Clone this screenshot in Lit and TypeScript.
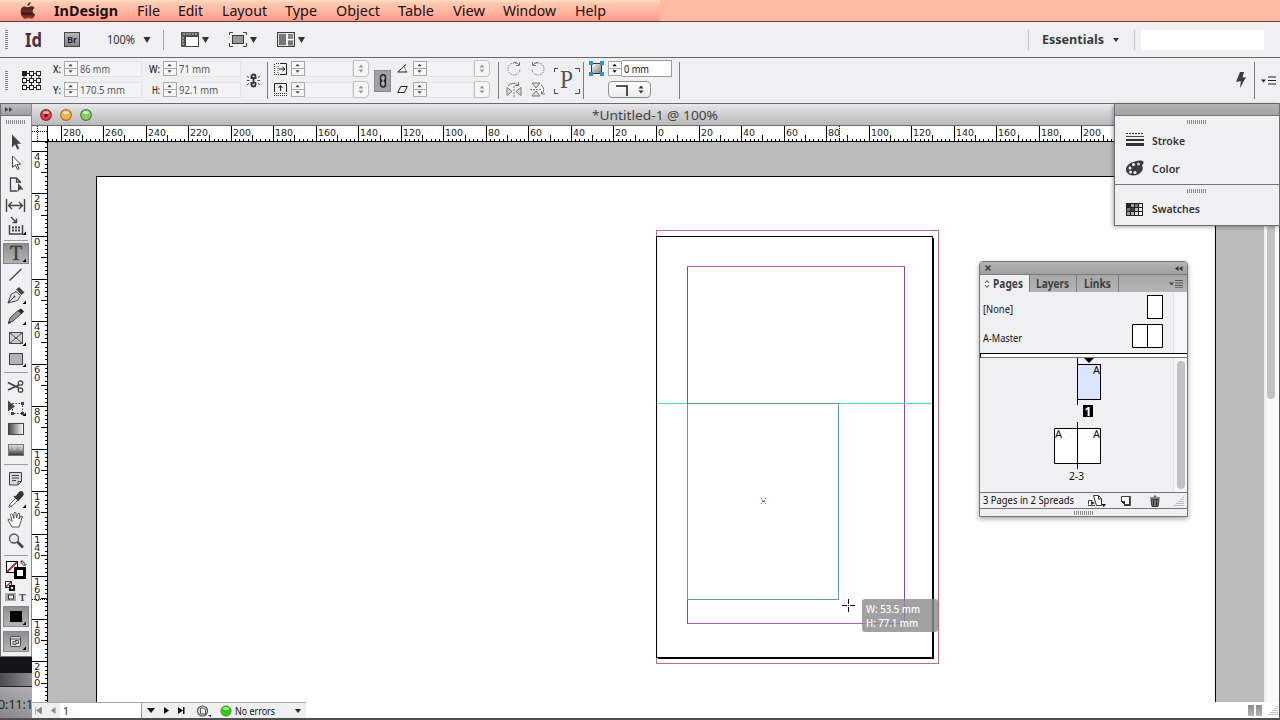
import { LitElement, html, svg, css, nothing } from 'lit';
import { customElement, property } from 'lit/decorators.js';

const MM = 2.1265; // px per millimetre at 100%

// text squeezed to a known advance, so labels keep the same rhythm on any font
const fit = (text: string, width: number, cls = '', height = 16, base = 12) => html`
  <svg class="fit ${cls}" width=${width} height=${height}>
    <text x="0" y=${base} textLength=${width} lengthAdjust="spacingAndGlyphs">${text}</text>
  </svg>`;

const icon = (w: number, h: number, body: unknown, cls = '') =>
  html`<svg class="icon ${cls}" width=${w} height=${h} viewBox="0 0 ${w} ${h}">${body}</svg>`;

const shared = css`
  :host {
    box-sizing: border-box;
    font-family: 'Noto Sans', 'Open Sans', sans-serif;
    font-size: 10.4px;
    color: #222;
  }
  * { box-sizing: border-box; }
  svg { display: block; flex: none; }
  .fit { overflow: visible; fill: currentColor; }
  .grip-h {
    width: 20px;
    height: 4px;
    background: repeating-linear-gradient(90deg, #8b8b8e 0 1px, transparent 1px 2px);
  }
  .grip-v {
    width: 3px;
    height: 20px;
    background: repeating-linear-gradient(#858588 0 1px, transparent 1px 2px);
  }
`;

/* ───────────── menu bar ───────────── */

@customElement('menu-bar')
class MenuBar extends LitElement {
  static styles = [shared, css`
    :host {
      display: flex;
      height: 22px;
      padding-left: 20px;
      border-bottom: 1px solid #6b3a31;
      background:
        linear-gradient(90deg, transparent 660px, #ffbaa4 660px),
        linear-gradient(#fbe3c4 0, #ffc9b0 3px, #ffb7a2 11px, #fd9d8c 20px, #f39482 21px);
      font-size: 14px;
      color: #21100c;
    }
    .apple { margin: 2px 18px 0 0; }
    .item { margin-right: 18.5px; }
    .app { font-weight: 700; }
  `];

  items: [string, number][] = [
    ['InDesign', 64], ['File', 23], ['Edit', 25], ['Layout', 45], ['Type', 32],
    ['Object', 44], ['Table', 36], ['View', 32], ['Window', 53], ['Help', 31],
  ];

  render() {
    return html`
      ${icon(16, 18, svg`
        <path d="M10.6 0c.2 2-1.4 3.9-3.2 3.9C7.2 2.1 8.9.3 10.6 0z" fill="#5a2b22"/>
        <path d="M7.9 5.2c.8 0 1.9-1 3.5-1 1.3 0 2.5.7 3.200 1.700-2.700 1.600-2.300 5.400.6 6.500-.7 2-2.200 4.600-3.700 4.600-1.100 0-1.600-.7-3-.7s-1.900.7-3 .7C3.200 17 .6 12.900.6 9.400c0-3.200 2-5 4-5 1.400 0 2.500.8 3.300.8z" fill="url(#a)"/>
        <defs><linearGradient id="a" x2="0" y2="1"><stop stop-color="#49201c"/><stop offset=".45" stop-color="#6a3028"/><stop offset=".55" stop-color="#3d1512"/><stop offset="1" stop-color="#a3503d"/></linearGradient></defs>
      `, 'apple')}
      ${this.items.map(([t, w], i) => html`<div class="item">${fit(t, w, i ? '' : 'app', 20, 16)}</div>`)}
    `;
  }
}

/* ───────────── application bar ───────────── */

@customElement('application-bar')
class ApplicationBar extends LitElement {
  static styles = [shared, css`
    :host {
      display: flex;
      align-items: center;
      height: 36px;
      padding: 0 16px 0 5px;
      background: #f0eff2;
      border-bottom: 1px solid #6a6a6c;
    }
    .id {
      margin-left: 17px;
      font-size: 20px;
      font-weight: 700;
      color: #4e3041;
    }
    .br {
      margin-left: 22px;
      width: 16px;
      height: 15px;
      border: 1px solid #444;
      background: linear-gradient(#b5b5b5, #858585);
      font-size: 9.5px;
      font-weight: 600;
      padding-left: 2px;
    }
    .zoom { margin: 1px 8px 0 27px; font-size: 12px; color: #333; }
    .rule { width: 1px; height: 20px; background: #a9a9ab; margin: 0 17px 0 12px; }
    .tool { margin-right: 20px; display: flex; align-items: center; gap: 3px; }
    .space { flex: 1; }
    .thin { width: 1px; height: 20px; background: #c4c4c6; }
    .workspace { margin: 0 9px 0 13px; font-size: 12.6px; font-weight: 700; color: #3b3b3d; }
    .small { margin-right: 15px; }
    .search { width: 123px; height: 20px; margin-left: 6px; background: #fff; }
  `];

  render() {
    const down = icon(7, 6, svg`<path d="M0 0h7L3.5 6z" fill="#303030"/>`);
    return html`
      <div class="grip-v"></div>
      ${fit('Id', 17, 'id', 22, 18)}
      <div class="br">${fit('Br', 10, '', 13, 10)}</div>
      ${fit('100%', 28, 'zoom', 16, 12)}
      ${icon(8, 6, svg`<path d="M.5 0h7L4 6z" fill="#303030"/>`)}
      <div class="rule"></div>
      <div class="tool">
        ${icon(18, 15, svg`
          <path d="M0 0h18v4H4v11H0z" fill="#555"/>
          <rect x="4.5" y="4.5" width="13" height="10" fill="#fff" stroke="#444"/>
          <path d="M3 1v2M6 1v2M9 1v2M12 1v2M15 1v2M1 6h2M1 9h2M1 12h2" stroke="#ccc"/>
        `)}${down}
      </div>
      <div class="tool">
        ${icon(18, 15, svg`
          <path d="M.5 3V.5H4M14 .5h3.5V3M17.5 11v3.5H14M4 14.5H.5V11" fill="none" stroke="#444"/>
          <rect x="3.5" y="3.5" width="11" height="8" fill="#999" stroke="#3c3c3c"/>
        `)}${down}
      </div>
      <div class="tool">
        ${icon(18, 15, svg`
          <rect x=".5" y=".5" width="17" height="14" fill="#ddd" stroke="#3c3c3c"/>
          <rect x="2" y="2" width="7" height="11" fill="#777"/>
          <rect x="11" y="2" width="5" height="5" fill="#888"/><rect x="11" y="8.5" width="5" height="5" fill="#777"/>
          <path d="M10 1v13M10 7.5h7" stroke="#fff"/>
        `)}${down}
      </div>
      <div class="space"></div>
      <div class="thin"></div>
      ${fit('Essentials', 62, 'workspace', 16, 12)}
      ${icon(6, 4, svg`<path d="M0 0h6L3 4z" fill="#303030"/>`, 'small')}
      <div class="thin"></div>
      <div class="search"></div>
    `;
  }
}

/* ───────────── numeric field with stepper ───────────── */

@customElement('stepper-field')
class StepperField extends LitElement {
  @property() value = '';
  @property({ type: Number }) textWidth = 0;
  @property({ type: Number }) width = 78;
  @property({ type: Boolean }) combo = false;
  @property({ type: Boolean }) bright = false;

  static styles = [shared, css`
    :host { display: flex; align-items: center; height: 17px; color: #555; }
    .step { border: 1px solid #a9a9ab; background: #f8f8f8; }
    .field {
      display: flex;
      align-items: center;
      height: 16px;
      padding-left: 2px;
      background: #f4f4f6;
      border: 1px solid #e4e4e6;
      border-left: 0;
    }
    .bright { background: #fff; color: #111; border-color: #999; height: 17px; }
    .pop {
      width: 16px;
      height: 17px;
      border: 1px solid #c1c1c3;
      border-radius: 0 4px 4px 0;
      background: #f6f6f7;
      padding: 3px 0 0 4px;
    }
  `];

  render() {
    const dim = this.combo ? 16 : 0;
    const fieldWidth = `width:${this.width - 14 - dim}px`;
    return html`
      ${icon(14, 15, svg`
        <path d="M0 7.5h14" stroke="#999"/>
        <path d="M4 5h5L6.5 2zM4 9.5h5L6.5 12.5z" fill=${this.bright ? '#000' : '#4a4a4a'}/>
      `, 'step')}
      <div class="field ${this.bright ? 'bright' : ''}" style=${fieldWidth}>
        ${this.value ? fit(this.value, this.textWidth, '', 14, 11) : nothing}
      </div>
      ${this.combo ? html`<div class="pop">${icon(6, 9, svg`<path d="M.5 3.5h5L3 .5zM.5 5.5h5L3 8.5z" fill="#999"/>`)}</div>` : nothing}
    `;
  }
}

/* ───────────── control panel strip ───────────── */

@customElement('control-strip')
class ControlStrip extends LitElement {
  static styles = [shared, css`
    :host {
      display: flex;
      align-items: center;
      height: 46px;
      padding: 0 4px 0 5px;
      background: #f0eff2;
      border-bottom: 1px solid #6a6a6c;
    }
    .col { display: flex; flex: none; flex-direction: column; gap: 4px; height: 38px; margin-bottom: 3px; }
    .line { display: flex; align-items: center; height: 17px; }
    .axis { justify-content: flex-end; gap: 3px; }
    .name { color: #222; font-weight: 500; }
    .pos { margin-left: 12px; }
    .size { margin-left: 7px; }
    .ref { margin-left: 14px; }
    .chain { margin-left: 6px; }
    .rule { width: 1px; height: 37px; background: #7d7d80; }
    .r1 { margin: 0 6px 0 7px; }
    .scale { gap: 4px; }
    .link {
      display: flex;
      align-items: center;
      justify-content: center;
      width: 17px;
      height: 22px;
      margin: 0 6px 0 5px;
      background: #a2a2a4;
      border: 1px solid #8b8b8d;
    }
    .ang { margin-right: 5px; }
    .r2 { margin: 0 7px 0 8px; }
    .turn { display: flex; gap: 8px; height: 17px; align-items: center; }
    .turn + .turn { margin-top: 1px; }
    .p { margin: 2px 3px 0 8px; }
    .p text { font-family: 'Liberation Serif', serif; font-size: 26px; fill: #555; }
    .wrap { margin: 1px 4px auto 5px; padding-top: 2px; }
    .corner {
      display: flex;
      align-items: center;
      justify-content: space-between;
      width: 43px;
      height: 17px;
      padding: 0 6px 0 6px;
      border: 1px solid #8f8f91;
      border-radius: 4px;
      background: linear-gradient(#fff, #ececee);
    }
    .r3 { margin-left: 7px; }
    .space { flex: 1; }
    .menu { margin-left: 6px; }
    .r4 { margin-left: 7px; }
  `];

  render() {
    const dots = [0, 1, 2].flatMap(r => [0, 1, 2].map(c => svg`
      <rect x=${.5 + c * 7} y=${.5 + r * 7} width="4" height="4" fill=${r + c ? '#f5f5f5' : '#222'} stroke="#222"/>`));
    return html`
      <div class="grip-v"></div>
      ${icon(19, 19, svg`<path d="M2 2.5h15v14H2zM2 9.5h15M9.5 2v15" fill="none" stroke="#222"/>${dots}`, 'ref')}
      <div class="col pos">
        ${this.axis('X:', 8, '86 mm', 30)}
        ${this.axis('Y:', 8, '170.5 mm', 45)}
      </div>
      <div class="col size">
        ${this.axis('W:', 11, '71 mm', 31)}
        ${this.axis('H:', 8, '92.1 mm', 39)}
      </div>
      ${icon(13, 15, svg`
        <path d="M4.5 6V3.5a2 2 0 0 1 4 0V6M4.5 9v2.5a2 2 0 0 0 4 0V9M6.5 4v7" fill="none" stroke="#333" stroke-width="1.9"/>
        <path d="M0 3l2 1.5M0 7.5h2.5M0 12l2-1.5M13 3l-2 1.5M13 7.5h-2.5M13 12l-2-1.5" stroke="#444"/>
      `, 'chain')}
      <div class="rule r1"></div>
      <div class="col">
        <div class="line scale">
          ${icon(13, 12, svg`
            <path d="M.5 1v11M2 .5h5M2 11.5h5M4 3v7" stroke="#333" stroke-dasharray="1 1" fill="none"/>
            <path d="M6 .5h6.5v11H6M5 6h5M8.5 4L11 6 8.5 8" stroke="#222" fill="none"/>
          `)}
          <stepper-field .width=${78} combo></stepper-field>
        </div>
        <div class="line scale">
          ${icon(13, 13, svg`
            <path d="M.5 9V.5h12V9" stroke="#222" fill="none"/>
            <path d="M6.5 8V3M4.500 5l2-2.500L8.500 5" stroke="#222" fill="none"/>
            <path d="M0 10.5h13M0 12.5h13" stroke="#333" stroke-dasharray="1 1"/>
          `)}
          <stepper-field .width=${78} combo></stepper-field>
        </div>
      </div>
      <div class="link">${icon(8, 14, svg`
        <rect x="1.5" y=".8" width="5" height="7" rx="2.5" fill="none" stroke="#222" stroke-width="1.4"/>
        <rect x="1.5" y="6" width="5" height="7" rx="2.5" fill="none" stroke="#222" stroke-width="1.4"/>
        <path d="M4 4v6" stroke="#eee"/>`)}</div>
      <div class="col">
        <div class="line">
          ${icon(11, 9, svg`<path d="M9 .5L.8 8h9.500" fill="none" stroke="#222"/><path d="M7 3q2 2 2 5" fill="none" stroke="#222" stroke-dasharray="1 1"/>`, 'ang')}
          <stepper-field .width=${77} combo></stepper-field>
        </div>
        <div class="line">
          ${icon(11, 7, svg`<path d="M.8 6.5l3-6h6.500l-3 6z" fill="none" stroke="#222"/>`, 'ang')}
          <stepper-field .width=${77} combo></stepper-field>
        </div>
      </div>
      <div class="rule r2"></div>
      <div class="col">
        <div class="turn">
          ${icon(16, 15, svg`<path d="M10.5 2.5A6 6 0 1 0 14 8" fill="none" stroke="#777" stroke-dasharray="1.5 1"/><path d="M8 1.500q3-1 5 2.500M13.500 1v3.500H10" fill="none" stroke="#777"/>`)}
          ${icon(16, 15, svg`<path d="M5.5 2.5A6 6 0 1 1 2 8" fill="none" stroke="#777" stroke-dasharray="1.5 1"/><path d="M8 1.500q-3-1-5 2.500M2.500 1v3.500H6" fill="none" stroke="#777"/>`)}
        </div>
        <div class="turn">
          ${icon(16, 15, svg`
            <path d="M1 5.5v8l5-4zM15 5.5v8l-5-4z" fill="#ddd" stroke="#777"/>
            <path d="M8 4v11" stroke="#777" stroke-dasharray="2 1"/><path d="M2 4q5-5 10-1M12.5 0v3.5H9" fill="none" stroke="#777"/>`)}
          ${icon(16, 15, svg`
            <path d="M2 1h8L6 6zM2 14h8L6 9z" fill="#ddd" stroke="#777"/>
            <path d="M0 7.5h12" stroke="#777" stroke-dasharray="2 1"/><path d="M11 3q5 4 1 9M15 12h-3.5V9" fill="none" stroke="#777"/>`)}
        </div>
      </div>
      ${icon(26, 27, svg`
        <path d="M.5 4V.5H4M21 .5h4.5V4M25.500 21v4.500H21M4 25.500H.5V21" fill="none" stroke="#444"/>
        <text x="6" y="20" textLength="13" lengthAdjust="spacingAndGlyphs">P</text>`, 'p')}
      <div class="rule"></div>
      <div class="wrap">
        ${icon(15, 15, svg`
          <rect x="2.5" y="2.5" width="10" height="10" fill="url(#g)" stroke="#333"/>
          <path d="M0 0h4v4H0zM11 0h4v4h-4zM0 11h4v4H0zM11 11h4v4h-4z" fill="#2b94d8"/>
          <defs><linearGradient id="g" x2="1" y2="1"><stop stop-color="#fff"/><stop offset="1" stop-color="#777"/></linearGradient></defs>`)}
      </div>
      <div class="col">
        <div class="line"><stepper-field value="0 mm" .textWidth=${25} .width=${64} bright></stepper-field></div>
        <div class="corner">
          ${icon(14, 12, svg`<path d="M1 2h11v10" fill="none" stroke="#222" stroke-width="1.6"/>`)}
          ${icon(6, 9, svg`<path d="M.5 3.5h5L3 .5zM.5 5.5h5L3 8.5z" fill="#333"/>`)}
        </div>
      </div>
      <div class="rule r3"></div>
      <div class="space"></div>
      ${icon(12, 17, svg`<path d="M5 0h4L7.5 5.5 11 5 5 16l.8-7L1 10z" fill="#3d3d40"/>`)}
      <div class="rule r4"></div>
      ${icon(15, 9, svg`<path d="M0 3.5h5L2.5 6.5z" fill="#222"/><path d="M7 1h8M7 4.5h8M7 8h8" stroke="#222"/>`, 'menu')}
    `;
  }

  axis(name: string, w: number, value: string, textWidth: number) {
    return html`
      <div class="line axis">
        ${fit(name, w, 'name', 14, 11)}
        <stepper-field value=${value} .textWidth=${textWidth} .width=${78}></stepper-field>
      </div>`;
  }
}

/* ───────────── toolbox ───────────── */

@customElement('tool-box')
class ToolBox extends LitElement {
  static styles = [shared, css`
    :host {
      display: flex;
      flex-direction: column;
      width: 32px;
      height: 553px;
      border-left: 1px solid #6f6f71;
      border-right: 1px solid #8b8b8d;
      border-bottom: 1px solid #6f6f71;
      background: #f0eff2;
    }
    .head {
      height: 12px;
      padding: 3px 0 0 4px;
      background: linear-gradient(#bdbdbf, #9f9fa1);
      border-bottom: 1px solid #757577;
    }
    .grip { padding: 4px 0 0 5px; height: 16px; }
    .slot { height: 21px; flex: none; }
    .on { margin: 0 2px; background: linear-gradient(#8f8f92, #b4b4b6); border: 1px solid #87878a; }
    .on svg { margin: -1px 0 0 -3px; }
    .sep { display: flex; flex: none; align-items: center; padding: 0 3px; }
    .sep::before { content: ''; height: 1px; flex: 1; background: #9f9fa2; }
    .s6 { height: 6px; }
    .s7 { height: 7px; }
    .s8 { height: 8px; }
    .t { font-family: 'Liberation Serif', serif; font-size: 20px; fill: #3a3a3a; stroke: #3a3a3a; stroke-width: .3; }
    .ts { font-family: 'Liberation Serif', serif; font-size: 10px; font-weight: 700; fill: #444; }
    .gap { height: 4px; flex: none; }
  `];

  slot_(body: unknown, more = false, on = false) {
    return html`<div class="slot ${on ? 'on' : ''}">
      ${icon(29, 21, svg`${body}${more ? svg`<path d="M25 15.5v3.5h-3.5z" fill="#000"/>` : nothing}`)}
    </div>`;
  }

  render() {
    return html`
      <div class="head">${icon(8, 5, svg`<path d="M0 0l3.5 2.5L0 5zM4 0l3.5 2.5L4 5z" fill="#444"/>`)}</div>
      <div class="grip"><div class="grip-h"></div></div>
      ${this.slot_(svg`<path d="M11 2.5v13l3-3 2.300 5 2-1-2.300-4.800h4.200z" fill="#444"/>`)}
      ${this.slot_(svg`<path d="M11.5 3v11.500l2.800-2.600 2.300 4.700 1.500-.8-2.200-4.500h3.700z" fill="#fff" stroke="#444"/>`)}
      ${this.slot_(svg`<path d="M19.5 9V8l-4-4h-6v13h7M15.5 4v4h4" fill="none" stroke="#444" stroke-width="1.3"/><path d="M17 9v8.500l2-2h3.500z" fill="#444"/>`)}
      ${this.slot_(svg`<path d="M5.5 4v13M23.500 4v13" stroke="#444" stroke-width="1.4"/><path d="M8 10.5h13M11 7l-3.500 3.500L11 14M18 7l3.500 3.500L18 14" fill="none" stroke="#444" stroke-width="1.3"/>`)}
      ${this.slot_(svg`<path d="M10 1l5 5M15.5 2.5v4h-4" fill="none" stroke="#444" stroke-width="1.4"/><path d="M8.5 9v9h13V9M21 10h1M8 10h1" fill="none" stroke="#444" stroke-width="1.5"/><path d="M11 11.5h8M11 14.5h8" stroke="#444" stroke-width="2" stroke-dasharray="2 1"/>`, true)}
      <div class="sep s6"></div>
      ${this.slot_(svg`<text class="t" x="9" y="17" textLength="12" lengthAdjust="spacingAndGlyphs">T</text>`, true, true)}
      ${this.slot_(svg`<path d="M8.5 16.5L20.500 5" stroke="#444" stroke-width="1.3"/>`)}
      ${this.slot_(svg`<path d="M7 18l3-8.500 5-3 4.500 4-3 5z" fill="#e2e2e4" stroke="#444"/><path d="M7 18l6-6" stroke="#444"/><path d="M15 4.500l3-2.500 5.500 5.500-3 2.500z" fill="#444"/><circle cx="13.5" cy="11.5" r="1" fill="#444"/>`, true)}
      ${this.slot_(svg`<path d="M7.5 17l1.500-5 8-7.500 3.500 3L12 15z" fill="#999" stroke="#444"/><path d="M7 18l1-3 2 2zM17 4.500l3-2 3 3-2.500 2.500z" fill="#222"/>`, true)}
      ${this.slot_(svg`<rect x="8.5" y="5.500" width="13" height="11" fill="#d0d0d2" stroke="#444"/><path d="M8.5 5.500l13 11M21.500 5.500l-13 11" stroke="#444"/>`, true)}
      ${this.slot_(svg`<rect x="8.5" y="5.500" width="13" height="11" fill="#b4b4b6" stroke="#444"/>`, true)}
      <div class="sep s7"></div>
      ${this.slot_(svg`<path d="M7 6.500l11 5.500M7 14l11-5" stroke="#444" stroke-width="1.8"/><circle cx="19.5" cy="7" r="2.2" fill="none" stroke="#444" stroke-width="1.3"/><circle cx="19.5" cy="14" r="2.2" fill="none" stroke="#444" stroke-width="1.3"/>`)}
      ${this.slot_(svg`<rect x="11.5" y="6.5" width="10" height="10" fill="none" stroke="#444" stroke-dasharray="1.5 1.5"/><path d="M7 3.500v11l7-5z" fill="#444"/><path d="M20 5h3v3h-3zM20 15h3v3h-3zM10 15h3v3h-3z" fill="#444"/>`, true)}
      ${this.slot_(svg`<defs><linearGradient id="l"><stop stop-color="#444"/><stop offset="1" stop-color="#fff"/></linearGradient></defs><rect x="7.5" y="5.500" width="15" height="11" fill="url(#l)" stroke="#444"/>`)}
      ${this.slot_(svg`<defs><linearGradient id="f" x2="0" y2="1"><stop stop-color="#eee"/><stop offset="1" stop-color="#333"/></linearGradient></defs><rect x="7.5" y="5.500" width="15" height="11" fill="url(#f)" stroke="#777"/><path d="M9 8h3M15 8h3M12 10h3M18 10h3" stroke="#bbb" stroke-width="2"/>`)}
      <div class="sep s8"></div>
      ${this.slot_(svg`<path d="M8.5 4.500h12v9l-3.500 3.500H8.500z" fill="#d8d8da" stroke="#444"/><path d="M20.5 13.500H17V17M11 7.500h7M11 10h7M11 12.500h4" fill="none" stroke="#444"/>`)}
      ${this.slot_(svg`<path d="M8 18l1-3 6-6 2 2-6 6z" fill="#fff" stroke="#555"/><path d="M13 7l5 5M15 8l3.500-4.500q2-1.500 3 0t0 3L17 11z" fill="#333" stroke="#333" stroke-width="1.5"/>`, true)}
      ${this.slot_(svg`<path d="M11 17l-4-7q0-1.500 2-.5l2 2-1.500-7q1-1.500 2 0l1.500 4V3q1-1.500 2 0l.5 5 1.500-4.500q1.500-.8 1.800.5L18 9l2-3q1.500-.3 1.300 1L19 14l-1 3z" fill="#fff" stroke="#444" stroke-width=".9"/>`)}
      ${this.slot_(svg`<circle cx="13" cy="7.500" r="4.500" fill="#e9e9ec" stroke="#555" stroke-width="1.3"/><path d="M16.5 11l5.500 5.500" stroke="#444" stroke-width="2.6"/>`)}
      <div class="sep s6"></div>
      ${icon(29, 23, svg`
        <rect x="5.5" y="3.5" width="11" height="11" fill="#fff" stroke="#000"/><path d="M6 14L16 4" stroke="#97274b" stroke-width="1.8"/>
        <rect x="14.5" y="10.500" width="9" height="9" fill="#fff" stroke="#000" stroke-width="3"/>
        <path d="M20 4q4-1 4 3M21.500 6l2 2 2-2M21.500 2L19.500 4l2 2" fill="none" stroke="#333"/>`)}
      ${icon(29, 11, svg`
        <rect x="4.5" y=".5" width="6" height="6" fill="#fff" stroke="#333"/><path d="M5 6l5-5" stroke="#97274b" stroke-width="1.5"/>
        <rect x="9" y="5" width="4" height="4" fill="#fff" stroke="#111" stroke-width="2"/>`)}
      ${icon(29, 14, svg`
        <rect x="4" y="1" width="11" height="8" fill="#aaa"/><rect x="7.500" y="3" width="5" height="4" fill="#eee" stroke="#333"/>
        <text class="ts" x="18" y="8.500">T</text>`)}
      ${this.slot_(svg`<rect x="9" y="5" width="12" height="11" fill="#000"/>`, true, true)}
      <div class="gap"></div>
      ${this.slot_(svg`<rect x="9.5" y="5.5" width="10" height="10" rx="1" fill="#ddd" stroke="#444"/><path d="M10 8h9M12 10.5h3v3h-3zM14 9.500h3.500v3H15" fill="none" stroke="#555"/>`, true, true)}
    `;
  }
}

/* ───────────── document window ───────────── */

@customElement('document-window')
class DocumentWindow extends LitElement {
  static styles = [shared, css`
    :host {
      display: flex;
      flex-direction: column;
      background: #fff;
      border-right: 1px solid #555;
    }
    .title {
      display: flex;
      align-items: center;
      height: 22px;
      padding-left: 8px;
      gap: 8px;
      background: linear-gradient(#e9e8ea, #cfcfd1 50%, #b9b8ba);
      border-bottom: 1px solid #686868;
      font-size: 12.6px;
      color: #444;
    }
    .name { margin-left: 492px; }
    .row { display: flex; }
    .ruler text { font-family: 'DejaVu Sans', sans-serif; font-size: 9.5px; fill: #222; }
    .bar { width: 15px; background: linear-gradient(90deg, #ececee, #fafafa 4px, #fafafa); padding-left: 3px; }
    .thumb { width: 8px; height: 257px; border-radius: 0 0 4px 4px; background: #c2c2c4; }
    .status { display: flex; height: 16px; background: #fff; }
    .nav {
      display: flex;
      align-items: center;
      width: 274px;
      border-top: 1px solid #a5a5a7;
      background: #efeef1;
      padding-left: 3px;
    }
    .page {
      display: flex;
      align-items: center;
      align-self: stretch;
      width: 82px;
      margin-left: 4px;
      padding-left: 3px;
      background: #fff;
      border-right: 1px solid #999;
    }
    .m4 { margin-left: 4px; }
    .m5 { margin-left: 5px; }
    .m9 { margin-left: 9px; }
    .m11 { margin-left: 11px; }
    .err { margin: 0 20px 0 3px; color: #111; }
    .fill { flex: 1; }
    .split { display: flex; gap: 2px; padding: 3px 5px 0 0; }
    .split i { width: 6px; height: 11px; background: linear-gradient(#8d8d8f, #b5b5b7); }
    .hint text { font-size: 11.5px; fill: #fff; font-weight: 500; }
  `];

  // ticks every 2 mm, longer at 10, full height with a number at 20
  hRuler() {
    const out: unknown[] = [];
    for (let mm = -290; mm <= 214; mm += 2) {
      const x = Math.round(656 + mm * MM) - 48 + .5;
      if (x < 0) continue;
      const top = mm % 20 === 0 ? 0 : mm % 10 === 0 ? 9 : 13;
      out.push(svg`<path d="M${x} ${top}V16" stroke="#000"/>`);
      if (top === 0) {
        const n = String(Math.abs(mm));
        out.push(svg`<text x=${x + 1.5} y="9.5" textLength=${n.length * 6} lengthAdjust="spacingAndGlyphs">${n}</text>`);
      }
    }
    return out;
  }

  vRuler() {
    const out: unknown[] = [];
    for (let mm = -44; mm <= 218; mm += 2) {
      const y = Math.round(236 + mm * MM) - 142 + .5;
      if (y < 0) continue;
      const left = mm % 20 === 0 ? 0 : mm % 10 === 0 ? 9 : 13;
      out.push(svg`<path d="M${left} ${y}H16" stroke="#000"/>`);
      if (left === 0) {
        out.push([...String(Math.abs(mm))].map((d, i) =>
          svg`<text x="2" y=${y + 8.8 + i * 7.8} textLength="6.4" lengthAdjust="spacingAndGlyphs">${d}</text>`));
      }
    }
    return out;
  }

  light(edge: string, fill: string, dot = false) {
    return icon(12, 12, svg`
      <circle cx="6" cy="6" r="5.3" fill=${fill} stroke=${edge} stroke-width="1.2"/>
      <ellipse cx="6" cy="3.5" rx="3" ry="1.5" fill="#fff" opacity=".6"/>
      ${dot ? svg`<circle cx="6" cy="6.5" r="1.7" fill="#5a0808"/>` : nothing}`);
  }

  render() {
    return html`
      <div class="title">
        ${this.light('#94262a', '#e2444a', true)}
        ${this.light('#a9702a', '#f5b450')}
        ${this.light('#4c8338', '#8bcf6a')}
        ${fit('*Untitled-1 @ 100%', 126, 'name', 18, 14)}
      </div>
      <div class="row">
        ${icon(16, 16, svg`<path d="M5.5 0v16M0 5.5h16" stroke="#000" stroke-dasharray="1 1"/><path d="M15.5 0v16M0 15.5h16" stroke="#000"/>`)}
        <svg class="ruler" width="1216" height="16" shape-rendering="crispEdges">
          ${this.hRuler()}
          <path d="M791.5 0V16" stroke="#000" stroke-dasharray="1 1"/>
          <path d="M0 15.5H1216" stroke="#000"/>
        </svg>
      </div>
      <div class="row">
        <svg class="ruler" width="16" height="560" shape-rendering="crispEdges">
          ${this.vRuler()}
          <path d="M0 457.5H16" stroke="#000" stroke-dasharray="1 1"/>
          <path d="M15.5 0V560" stroke="#000"/>
        </svg>
        ${this.canvas()}
        <div class="bar"><div class="thumb"></div></div>
      </div>
      <div class="status">
        <div class="nav">
          ${icon(7, 7, svg`<path d="M.5 0v7M6.5 0v7L1.5 3.5z" fill="#888" stroke="#888" stroke-width=".7"/>`)}
          ${icon(5, 7, svg`<path d="M4.5 0v7L0 3.5z" fill="#888"/>`, 'm9')}
          <div class="page">${fit('1', 6, '', 14, 11)}</div>
          ${icon(8, 5, svg`<path d="M0 0h8L4 5z" fill="#111"/>`, 'm5')}
          ${icon(5, 7, svg`<path d="M0 0v7l5-3.500z" fill="#111"/>`, 'm9')}
          ${icon(7, 7, svg`<path d="M0 0v7l5-3.500zM5 0h1.500v7H5z" fill="#111"/>`, 'm9')}
          ${icon(15, 12, svg`
            <circle cx="6.5" cy="6" r="5" fill="#ddd" stroke="#555" stroke-width="1.2"/>
            <path d="M4.5 3h3l2 2v4h-5z" fill="#eee" stroke="#555"/><path d="M12 10h3v2z" fill="#111"/>`, 'm11')}
          ${icon(12, 12, svg`<circle cx="6" cy="6" r="5.2" fill="#39c51d" stroke="#2a8d16" stroke-width=".6"/><ellipse cx="6" cy="3.500" rx="3" ry="1.5" fill="#a2f08e"/>`, 'm9')}
          ${fit('No errors', 40, 'err', 14, 11)}
          ${icon(6, 4, svg`<path d="M0 0h6L3 4z" fill="#222"/>`)}
        </div>
        <div class="fill"></div>
        <div class="split"><i></i><i></i></div>
        ${icon(12, 14, svg`<path d="M9.5 4.5h2M7.5 6.5h4M5.500 8.500h6M3.500 10.500h8M1.500 12.500h10" stroke="#888" stroke-dasharray="1 1"/>`)}
      </div>
    `;
  }

  // pasteboard, in window coordinates
  canvas() {
    return html`
      <svg width="1216" height="560" viewBox="48 142 1216 560" shape-rendering="crispEdges" fill="none">
        <path d="M48 142h1216v560H48z" fill="#bbb"/>
        <rect x="96.5" y="176.5" width="1119" height="600" fill="#fff" stroke="#000"/>
        <rect x="656.5" y="230.5" width="282" height="432.5" stroke="#c06c82"/>
        <path d="M656.5 236.5H932.5V657.5H656.5z" fill="#fff" stroke="#000"/>
        <path d="M933.5 238V658.5H658" stroke="#000"/>
        <path d="M687 266h1v358h-1zM904 266h1v358h-1z" fill="#8a44a4"/>
        <path d="M687 266h218v1H687zM687 623h218v1H687z" fill="#b45cb8"/>
        <path d="M657 403h275v1H657z" fill="#3fd6d6"/>
        <path d="M687 403h152v197H687zM688 404v195h150V404z" fill="#5e9bb5" fill-rule="evenodd"/>
        <path d="M761 498h1v1h-1zM765 498h1v1h-1zM762 500h1v1h-1zM764 500h1v1h-1zM762 501h3v1h-3zM761 503h1v1h-1zM765 503h1v1h-1z" fill="#5080a8"/>
        <path d="M842 605.5h5M850 605.5h5M848.5 599v5M848.5 607v5M848 605.5h1" stroke="#000"/>
        <g class="hint" shape-rendering="auto">
          <rect x="862" y="599" width="76" height="33" rx="3" fill="#8c8c8c" opacity=".82"/>
          <text x="866" y="613" textLength="54" lengthAdjust="spacingAndGlyphs">W: 53.5 mm</text>
          <text x="866" y="627" textLength="52" lengthAdjust="spacingAndGlyphs">H: 77.1 mm</text>
        </g>
      </svg>`;
  }
}

/* ───────────── collapsed dock ───────────── */

@customElement('side-dock')
class SideDock extends LitElement {
  static styles = [shared, css`
    :host {
      display: flex;
      flex-direction: column;
      width: 166px;
      height: 122px;
      background: #f0eff2;
      border: 1px solid #6f6f71;
      border-top: 0;
      box-shadow: -1px 1px 4px rgba(0, 0, 0, .35);
      font-size: 11.3px;
      font-weight: 600;
      color: #333;
    }
    .head { height: 12px; background: linear-gradient(#b3b3b3, #a3a3a3); border-bottom: 1px solid #757577; }
    .grip { padding: 4px 0 0 72px; height: 10px; }
    .entry { display: flex; align-items: center; gap: 8px; height: 28px; padding-left: 11px; }
    .cut { height: 1px; margin-top: 2px; background: #757577; }
  `];

  render() {
    const shades = ['#222', '#999', '#777', '#ddd', '#777', '#444', '#bbb', '#eee', '#999', '#aaa', '#ddd', '#fff'];
    const cells = shades.map((c, i) => svg`
      <rect x=${1 + (i % 4) * 4} y=${1 + Math.floor(i / 4) * 4} width="3" height="3" fill=${c}/>`);
    return html`
      <div class="head"></div>
      <div class="grip"><div class="grip-h"></div></div>
      <div class="entry">
        ${icon(18, 14, svg`<path d="M0 .5h18" stroke="#333" stroke-dasharray="2 1"/><path d="M0 3.5h18" stroke="#444"/><path d="M0 7h18" stroke="#333" stroke-width="2"/><path d="M0 11.500h18" stroke="#333" stroke-width="3"/>`)}
        ${fit('Stroke', 33, '', 16, 12.5)}
      </div>
      <div class="entry">
        ${icon(18, 16, svg`
          <path d="M9 1.500C14 0 18 0 17.500 3c-.3 1.500-2 1.500-1 3.500C18 10 14 15.500 7.500 15.500 2 15.500 0 12 0 9.500 0 5.500 4 2.500 9 1.500z" fill="#3c3c3f"/>
          <circle cx="4" cy="8" r="1.5" fill="#eee"/><circle cx="7.5" cy="4.5" r="1.5" fill="#eee"/><circle cx="12.5" cy="4" r="1.5" fill="#ccc"/>
          <circle cx="4.5" cy="12" r="1.5" fill="#eee"/><circle cx="9" cy="12.5" r="1.6" fill="#eee"/>`)}
        ${fit('Color', 28, '', 16, 12.5)}
      </div>
      <div class="cut"></div>
      <div class="grip"><div class="grip-h"></div></div>
      <div class="entry">
        ${icon(18, 13, svg`<rect width="17" height="13" fill="#222"/>${cells}`)}
        ${fit('Swatches', 48, '', 16, 12)}
      </div>
    `;
  }
}

/* ───────────── Pages panel ───────────── */

@customElement('pages-panel')
class PagesPanel extends LitElement {
  static styles = [shared, css`
    :host {
      display: flex;
      flex-direction: column;
      width: 209px;
      height: 256px;
      border: 1px solid #757577;
      border-radius: 4px 4px 0 0;
      background: #f0eff2;
      box-shadow: 0 2px 5px rgba(0, 0, 0, .35);
      color: #111;
    }
    .head {
      display: flex;
      justify-content: space-between;
      align-items: center;
      height: 13px;
      padding: 0 4px 0 5px;
      border-radius: 3px 3px 0 0;
      background: linear-gradient(#b4b4b4, #a0a0a0);
      border-bottom: 1px solid #7b7b7d;
    }
    .tabs { display: flex; height: 17px; background: linear-gradient(#a7a7a9, #b5b5b7); font-size: 11.5px; font-weight: 700; color: #3e3e40; }
    .tab { display: flex; align-items: center; border-right: 1px solid #7b7b7d; padding-left: 6px; }
    .cur { width: 50px; padding-left: 4px; gap: 3px; background: #f0eff2; }
    .lay { width: 47px; }
    .lnk { width: 42px; padding-left: 7px; }
    .more { flex: 1; display: flex; justify-content: flex-end; align-items: center; padding-right: 4px; }
    .masters { height: 61px; display: flex; }
    .names { flex: 1; display: flex; flex-direction: column; padding: 1px 10px 0 3px; }
    .master { display: flex; justify-content: space-between; align-items: center; height: 29px; }
    .gutter { width: 14px; border-left: 1px solid #e0e0e3; background: #f6f6f8; }
    .divide { height: 5px; border: 1px solid #000; border-bottom-color: #777; border-right: 0; background: #fff; }
    .spreads { height: 134px; display: flex; }
    .area { width: 193px; }
    .area text { font-size: 10.5px; fill: #111; }
    .area .num { font-size: 12px; font-weight: 700; fill: #fff; }
    .thumb { width: 8px; height: 128px; margin: 3px 0 0 3px; border-radius: 4px; background: #c1c1c4; }
    .foot { display: flex; align-items: center; height: 17px; padding: 0 1px 0 3px; border: solid #757577; border-width: 1px 0; }
    .count { margin-right: 14px; }
    .f1 { margin-right: 14px; }
    .f2 { margin-right: 19px; }
    .f3 { margin-right: 14px; }
    .end { padding: 2px 0 0 94px; }
  `];

  render() {
    return html`
      <div class="head">
        ${icon(6, 6, svg`<path d="M.5.5l5 5M5.500.5l-5 5" stroke="#333" stroke-width="1.3"/>`)}
        ${icon(8, 5, svg`<path d="M3.5 0v5L0 2.5zM7.500 0v5L4 2.500z" fill="#333"/>`)}
      </div>
      <div class="tabs">
        <div class="tab cur">
          ${icon(6, 8, svg`<path d="M1 3l2-2.500L5 3M1 5l2 2.500L5 5" fill="none" stroke="#444"/>`)}
          ${fit('Pages', 30, '', 16, 12)}
        </div>
        <div class="tab lay">${fit('Layers', 33, '', 16, 12)}</div>
        <div class="tab lnk">${fit('Links', 27, '', 16, 12)}</div>
        <div class="more">${icon(14, 8, svg`<path d="M0 2.5h5L2.5 5.5z" fill="#444"/><path d="M6 .5h8M6 3h8M6 5.500h8M6 7.800h8" stroke="#555"/>`)}</div>
      </div>
      <div class="masters">
        <div class="names">
          <div class="master">
            ${fit('[None]', 30, '', 14, 12)}
            ${icon(16, 25, svg`<rect x=".5" y=".5" width="15" height="23" fill="#fff" stroke="#000"/>`)}
          </div>
          <div class="master">
            ${fit('A-Master', 39, '', 14, 12)}
            ${icon(31, 25, svg`<path d="M.5.5h30v23H.5zM15.500 0v24" fill="#fff" stroke="#000"/>`)}
          </div>
        </div>
        <div class="gutter"></div>
      </div>
      <div class="divide"></div>
      <div class="spreads">
        <svg class="area" width="193" height="134" viewBox="980 358 193 134">
          <path d="M1077.5 358v47M1077.5 422v47" stroke="#000"/>
          <path d="M1084 358h10l-5 5z" fill="#000"/>
          <rect x="1077.5" y="364.5" width="23" height="35" fill="#dae6fd" stroke="#000"/>
          <text x="1093" y="374" textLength="7" lengthAdjust="spacingAndGlyphs">A</text>
          <rect x="1083" y="405" width="10" height="12" fill="#000"/>
          <text class="num" x="1084.5" y="415.5" textLength="7">1</text>
          <path d="M1054.5 428.5h46v35h-46zM1077.5 428v36" fill="#fff" stroke="#000"/>
          <text x="1055" y="438" textLength="7" lengthAdjust="spacingAndGlyphs">A</text>
          <text x="1093" y="438" textLength="7" lengthAdjust="spacingAndGlyphs">A</text>
          <text x="1069" y="479.5" textLength="15" lengthAdjust="spacingAndGlyphs">2-3</text>
        </svg>
        <div class="gutter"><div class="thumb"></div></div>
      </div>
      <div class="foot">
        ${fit('3 Pages in 2 Spreads', 91, 'count', 14, 10)}
        ${icon(18, 12, svg`
          <path d="M.5 9.5V5.5h4" fill="none" stroke="#444"/><path d="M0 10.5h7" stroke="#444"/>
          <path d="M5.5.5h5l3 3v7h-5zM10.5 1v3h3" fill="#fff" stroke="#333"/><path d="M3 6l4 2-4 2z" fill="#333"/><path d="M13.5 9h4.500L15.800 12z" fill="#111"/>`, 'f1')}
        ${icon(11, 11, svg`<path d="M1.5 1.5h8v8h-5l-3-3z" fill="#fff" stroke="#444"/><path d="M10 1v9.500H4" stroke="#333" stroke-width="1.6" fill="none"/><path d="M1 6h4v4z" fill="#333"/>`, 'f2')}
        ${icon(10, 12, svg`<path d="M1 4.5h8l-1 7H2z" fill="#777" stroke="#333"/><path d="M0 3h10M3.5 2q1.500-2.500 3 0M3.500 5.500v5M6.500 5.500v5" stroke="#222" fill="none"/>`, 'f3')}
        ${icon(10, 10, svg`<path d="M8.5 1.5h2M6.5 3.5h4M4.500 5.500h6M2.500 7.500h8M.5 9.500h10" stroke="#888" stroke-dasharray="1 1"/>`)}
      </div>
      <div class="end"><div class="grip-h"></div></div>
    `;
  }
}

@customElement('app-root')
class AppRoot extends LitElement {
  static styles = [shared, css`
    :host {
      display: flex;
      flex-direction: column;
      position: relative;
      width: 1280px;
      height: 720px;
      overflow: hidden;
      background: #4e4f4f;
    }
    .main { display: flex; height: 614px; }
    .left { width: 32px; display: flex; flex-direction: column; background: #141416; }
    .below { margin-top: 16px; height: 14px; background: linear-gradient(90deg, #4a4a4d, #8f8f93); border-bottom: 1px solid #222; }
    .clock {
      flex: 1;
      overflow: hidden;
      padding-top: 8px;
      background: linear-gradient(90deg, transparent, rgba(255, 255, 255, .15)), linear-gradient(#a3a3a6, #858589);
      font-size: 13px;
    }
    .time { margin-left: -2px; }
    document-window { flex: 1; }
    side-dock { position: absolute; left: 1114px; top: 104px; }
    pages-panel { position: absolute; left: 979px; top: 261px; }
  `];

  render() {
    return html`
      <menu-bar></menu-bar>
      <application-bar></application-bar>
      <control-strip></control-strip>
      <div class="main">
        <div class="left">
          <tool-box></tool-box>
          <div class="below"></div>
          <div class="clock">${fit('0:11:1', 35, 'time', 18, 14)}</div>
        </div>
        <document-window></document-window>
      </div>
      <side-dock></side-dock>
      <pages-panel></pages-panel>
    `;
  }
}
